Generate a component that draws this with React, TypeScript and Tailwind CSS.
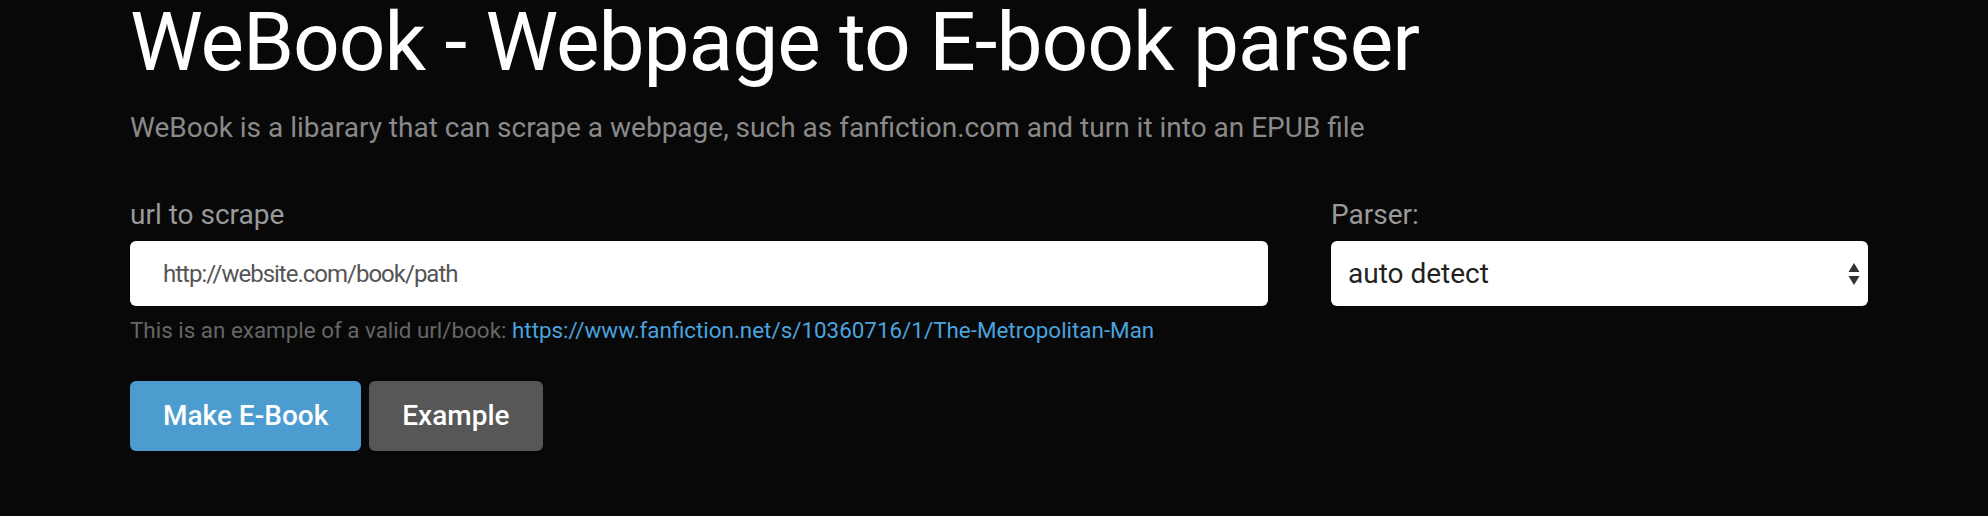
import { useState } from "react";

const PARSERS = ["auto detect", "fanfiction.net", "archiveofourown.org"];

export default function App() {
  const [url, setUrl] = useState("");
  const [parser, setParser] = useState(PARSERS[0]);

  return (
    <div className="min-h-[516px] w-full bg-[#080808] font-['Roboto','Liberation_Sans',sans-serif]">
      <div className="pl-[130px] pr-[120px]">
        <h1 className="text-[82px] leading-[84px] font-normal tracking-[-1px] text-white">
          WeBook - Webpage to E-book parser
        </h1>
        <p className="mt-[28px] text-[28px] leading-[32px] text-[#8a8a8a]">
          WeBook is a libarary that can scrape a webpage, such as fanfiction.com and turn it into an EPUB file
        </p>

        <div className="mt-[55px] grid grid-cols-[1138px_537px] gap-x-[63px]">
          {/* url column */}
          <div>
            <label className="block text-[28px] leading-[32px] text-[#999]">url to scrape</label>
            <input
              value={url}
              onChange={(e) => setUrl(e.target.value)}
              placeholder="http://website.com/book/path"
              className="mt-[10px] block h-[65px] w-full rounded-[6px] bg-white px-[33px] text-[24px] tracking-[-1px] text-[#555] placeholder:text-[#555] outline-none"
            />
            <p className="mt-[10px] text-[22.4px] leading-[28px] text-[#666]">
              This is an example of a valid url/book:{" "}
              <a href="#" className="text-[#4aa3df]">
                https://www.fanfiction.net/s/10360716/1/The-Metropolitan-Man
              </a>
            </p>
          </div>

          {/* parser column */}
          <div>
            <label className="block text-[28px] leading-[32px] text-[#999]">Parser:</label>
            <div className="relative mt-[10px]">
              <select
                value={parser}
                onChange={(e) => setParser(e.target.value)}
                className="block h-[65px] w-full appearance-none rounded-[6px] bg-white pl-[17px] pr-10 text-[28px] text-[#222] outline-none"
              >
                {PARSERS.map((p) => (
                  <option key={p}>{p}</option>
                ))}
              </select>
              <svg
                className="pointer-events-none absolute right-[8px] top-1/2 -translate-y-1/2"
                width="12"
                height="26"
                viewBox="0 0 12 26"
              >
                <path d="M6 2 L11.5 11 L0.5 11 Z" fill="#333" />
                <path d="M0.5 15 L11.5 15 L6 24 Z" fill="#333" />
              </svg>
            </div>
          </div>
        </div>

        <div className="mt-[37px] flex gap-[8px]">
          <button className="h-[70px] rounded-[6px] bg-[#4d9cd0] px-[33px] text-[28px] font-medium text-white">
            Make E-Book
          </button>
          <button className="h-[70px] rounded-[6px] bg-[#575757] px-[33px] text-[28px] font-medium text-white">
            Example
          </button>
        </div>
      </div>
    </div>
  );
}
